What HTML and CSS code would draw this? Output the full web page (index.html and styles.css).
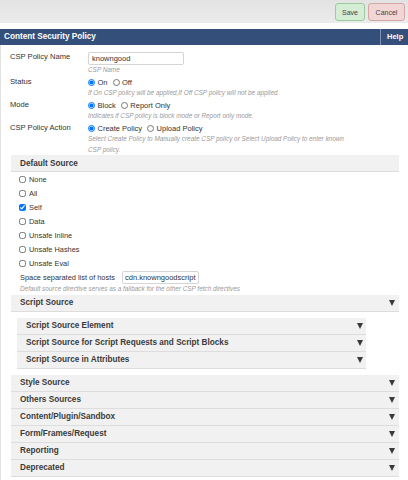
FILE: index.html
```html
<!DOCTYPE html>
<html>
<head>
<meta charset="utf-8">
<link rel="stylesheet" href="styles.css">
</head>
<body>
<div class="toolbar">
  <button class="btn btn-save">Save</button>
  <button class="btn btn-cancel">Cancel</button>
</div>
<div class="panel">
  <div class="panel-head">
    <span class="panel-title">Content Security Policy</span>
    <span class="panel-help">Help</span>
  </div>
  <div class="panel-body">
    <div class="row">
      <div class="row-label">CSP Policy Name</div>
      <div class="row-value">
        <input class="txt txt-name" type="text" value="knowngood">
        <div class="hint">CSP Name</div>
      </div>
    </div>
    <div class="row">
      <div class="row-label">Status</div>
      <div class="row-value">
        <div class="radios">
          <label class="radio"><input type="radio" name="st" checked>On</label>
          <label class="radio"><input type="radio" name="st">Off</label>
        </div>
        <div class="hint">If On CSP policy will be applied,If Off CSP policy will not be applied.</div>
      </div>
    </div>
    <div class="row">
      <div class="row-label">Mode</div>
      <div class="row-value">
        <div class="radios">
          <label class="radio"><input type="radio" name="md" checked>Block</label>
          <label class="radio"><input type="radio" name="md">Report Only</label>
        </div>
        <div class="hint">Indicates if CSP policy is block mode or Report only mode.</div>
      </div>
    </div>
    <div class="row row-last">
      <div class="row-label">CSP Policy Action</div>
      <div class="row-value">
        <div class="radios">
          <label class="radio"><input type="radio" name="ac" checked>Create Policy</label>
          <label class="radio"><input type="radio" name="ac">Upload Policy</label>
        </div>
        <div class="hint hint-wrap">Select Create Policy to Manually create CSP policy or Select Upload Policy to enter known CSP policy.</div>
      </div>
    </div>

    <div class="section">
      <div class="sec-head">Default Source</div>
      <div class="sec-body">
        <label class="check"><input type="checkbox">None</label>
        <label class="check"><input type="checkbox">All</label>
        <label class="check"><input type="checkbox" checked>Self</label>
        <label class="check"><input type="checkbox">Data</label>
        <label class="check"><input type="checkbox">Unsafe Inline</label>
        <label class="check"><input type="checkbox">Unsafe Hashes</label>
        <label class="check"><input type="checkbox">Unsafe Eval</label>
        <div class="hosts">
          <span class="hosts-label">Space separated list of hosts</span>
          <input class="txt txt-hosts" type="text" value="cdn.knowngoodscript">
        </div>
        <div class="hint hint-src">Default source directive serves as a fallback for the other CSP fetch directives</div>
      </div>
    </div>

    <div class="section">
      <div class="sec-head">Script Source<span class="caret"></span></div>
      <div class="subs">
        <div class="sub-head">Script Source Element<span class="caret"></span></div>
        <div class="sub-head">Script Source for Script Requests and Script Blocks<span class="caret"></span></div>
        <div class="sub-head">Script Source in Attributes<span class="caret"></span></div>
      </div>
    </div>

    <div class="section">
      <div class="sec-head">Style Source<span class="caret"></span></div>
    </div>
    <div class="section">
      <div class="sec-head">Others Sources<span class="caret"></span></div>
    </div>
    <div class="section">
      <div class="sec-head">Content/Plugin/Sandbox<span class="caret"></span></div>
    </div>
    <div class="section">
      <div class="sec-head">Form/Frames/Request<span class="caret"></span></div>
    </div>
    <div class="section">
      <div class="sec-head">Reporting<span class="caret"></span></div>
    </div>
    <div class="section">
      <div class="sec-head">Deprecated<span class="caret"></span></div>
    </div>
  </div>
</div>
</body>
</html>
```

FILE: styles.css
```css
* { box-sizing: border-box; }

body {
  margin: 0;
  width: 408px;
  height: 480px;
  overflow: hidden;
  background: #fff;
  color: #333;
  font-family: "Liberation Sans", Arial, sans-serif;
}

.toolbar {
  height: 23px;
  background: linear-gradient(#e3e3e3, #ebebeb);
  display: flex;
  justify-content: flex-end;
  align-items: flex-start;
  gap: 3px;
  padding: 3px 3px 0 0;
}

.btn {
  height: 18px;
  padding: 0;
  border-radius: 3px;
  font-family: "Liberation Sans", Arial, sans-serif;
  font-size: 7px;
  color: #444;
}

.btn-save {
  width: 30px;
  background: #d5ecd5;
  border: 1px solid #9ccb9c;
}

.btn-cancel {
  width: 37px;
  background: #f2d6d6;
  border: 1px solid #d6a6a6;
}

.panel {
  margin-top: 6px;
}

.panel-head {
  display: flex;
  height: 16px;
  background: #354f7b;
  color: #fff;
  font-weight: bold;
}

.panel-title {
  flex: 1;
  font-size: 8.2px;
  line-height: 16px;
  padding-left: 4px;
}

.panel-help {
  width: 28px;
  border-left: 1px solid #7f90b0;
  font-size: 7.5px;
  line-height: 16px;
  padding-left: 6px;
}

.panel-body {
  border-left: 1px solid #e2e2e2;
  padding-top: 7px;
  height: 435px;
}

.row {
  display: flex;
  margin-bottom: 1.5px;
}

.row-last {
  margin-bottom: 0;
}

.row-label {
  width: 87px;
  padding-left: 9px;
  font-size: 7.6px;
  line-height: 9px;
}

.row-value {
  flex: 1;
}

.txt {
  display: block;
  height: 13px;
  padding: 0 3px;
  border: 1px solid #d4d4d4;
  border-radius: 2px;
  font-family: "Liberation Sans", Arial, sans-serif;
  font-size: 7.5px;
  color: #333;
  outline: none;
}

.txt-name {
  width: 96px;
}

.hint {
  font-size: 6.4px;
  font-style: italic;
  color: #999;
  line-height: 10.5px;
}

.hint-wrap {
  width: 262px;
}

.radios {
  display: flex;
  align-items: center;
  height: 11px;
  font-size: 7.5px;
}

.radio {
  display: flex;
  align-items: center;
  gap: 2.5px;
  margin-right: 5px;
}

.radio input {
  width: 7px;
  height: 7px;
  margin: 0;
}

.section {
  margin: 0 9px 0 10px;
}

.sec-head,
.sub-head {
  display: flex;
  justify-content: space-between;
  align-items: center;
  height: 17px;
  padding: 0 4px 0 9px;
  background: #f1f1f1;
  border-bottom: 1px solid #dddddd;
  font-weight: bold;
  font-size: 8.2px;
  color: #3a3a3a;
}

.check {
  display: flex;
  align-items: center;
  gap: 3px;
  height: 14px;
  padding-left: 8px;
  font-size: 7.4px;
  color: #333;
}

.check input {
  width: 7px;
  height: 7px;
  margin: 0;
}

.hosts {
  display: flex;
  align-items: center;
  padding: 1px 0 0 9px;
  font-size: 7.4px;
  color: #333;
}

.hosts-label {
  width: 102px;
  color: #333;
}

.txt-hosts {
  width: 77px;
  height: 12.5px;
  padding: 0 2px;
}

.hint-src {
  padding-left: 9px;
  line-height: 10px;
  margin-bottom: 1px;
}

.subs {
  margin: 6px 33px 6px 6px;
}

.sub-head {
  padding-right: 3px;
}

.caret {
  width: 0;
  height: 0;
  border-left: 3px solid transparent;
  border-right: 3px solid transparent;
  border-top: 6px solid #3a3a3a;
}
```
